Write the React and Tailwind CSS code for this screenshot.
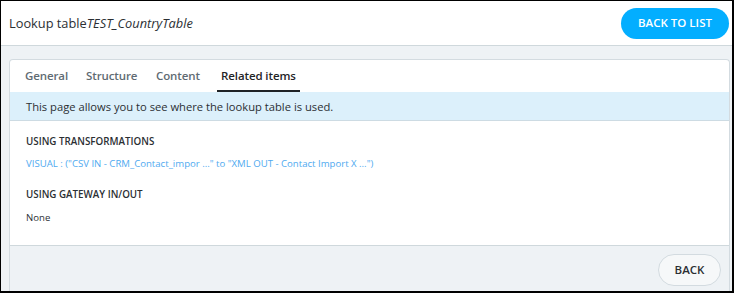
export default function App() {
  return (
    <div className="w-[734px] h-[294px] bg-white overflow-hidden" style={{ fontFamily: '"Open Sans", "Noto Sans", sans-serif' }}>
      <div className="w-[734px] h-[293px] border-l border-t border-r-2 border-b-2 border-black flex flex-col overflow-hidden">
        <div className="h-[45px] shrink-0 bg-white border-b border-[#cfd8dc] flex items-center justify-between pl-[8px] pr-[3px]">
          <div className="text-[12.8px] text-[#2b2f33] leading-none">
            Lookup table<span className="italic">TEST_CountryTable</span>
          </div>
          <button className="h-[31px] w-[108px] rounded-full bg-[#03aeff] text-white text-[11.5px] font-semibold">BACK TO LIST</button>
        </div>
        <div className="flex-1 bg-[#eef2f5] pl-[8px] pr-[2px] pt-[13px]">
          <div className="h-full bg-white border border-[#d3dbe0] border-b-0 rounded-t-[4px] flex flex-col">
            <div className="h-[32px] flex items-stretch pl-[15px] text-[11.5px] font-semibold tracking-[-0.1px]">
              <div className="flex items-center text-[#5f6b73] w-[61px]">General</div>
              <div className="flex items-center text-[#5f6b73] w-[70px]">Structure</div>
              <div className="flex items-center text-[#5f6b73] w-[61px]">Content</div>
              <div className="flex items-center text-[#1f2326] relative px-[4px]">
                Related items
                <div className="absolute left-0 right-0 bottom-0 h-[2px] bg-[#1f2326]"></div>
              </div>
            </div>
            <div className="h-[29px] bg-[#dcf0fb] border-b border-[#cddbe3] flex items-center pl-[16px] pt-[2px] text-[11.2px] text-[#2b2f33]">
              This page allows you to see where the lookup table is used.
            </div>
            <div className="h-[124px] pl-[16px] pt-[14px] flex flex-col">
              <div className="text-[9.8px] font-semibold text-[#2b2f33] leading-[14px]">USING TRANSFORMATIONS</div>
              <div className="text-[9.6px] text-[#50aaf0] leading-[14px] mt-[8px]">VISUAL : ("CSV IN - CRM_Contact_impor ..." to "XML OUT - Contact Import X ...")</div>
              <div className="text-[9.8px] font-semibold text-[#2b2f33] leading-[14px] mt-[17px]">USING GATEWAY IN/OUT</div>
              <div className="text-[9.6px] text-[#2b2f33] leading-[14px] mt-[9px]">None</div>
            </div>
            <div className="flex-1 bg-[#eef2f5] border-t border-[#cfd8dc] flex justify-end pt-[8px] pr-[8px]">
              <button className="h-[32px] w-[63px] rounded-full bg-[#f6f8f9] border border-[#d3dbe0] text-[11.5px] font-semibold text-[#2b2f33]">BACK</button>
            </div>
          </div>
        </div>
      </div>
    </div>
  );
}
